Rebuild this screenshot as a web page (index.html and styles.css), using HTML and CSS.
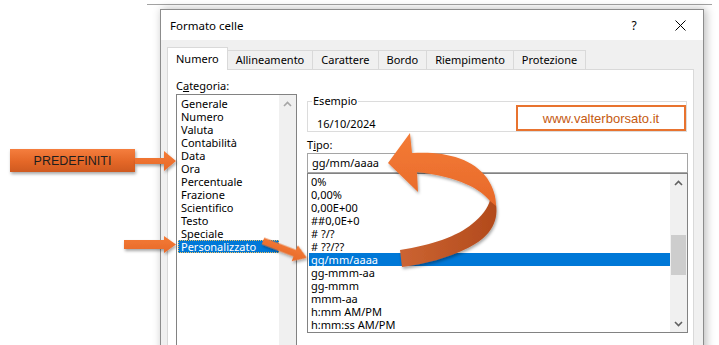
FILE: index.html
```html
<!DOCTYPE html>
<html lang="it">
<head>
    <meta charset="UTF-8">
    <meta name="viewport" content="width=device-width, initial-scale=1.0">
    <title>Formato celle</title>
    <link rel="stylesheet" href="styles.css">
</head>
<body>
    <div class="desk">
        <div class="dialog">
            <div class="titlebar">
                <span class="title">Formato celle</span>
                <span class="tbtn help">?</span>
                <span class="tbtn">
                    <svg width="11" height="11" viewBox="0 0 11 11"><path d="M0.5 0.5 L10.5 10.5 M10.5 0.5 L0.5 10.5" stroke="#000" stroke-width="1" fill="none"/></svg>
                </span>
            </div>
            <div class="dialog-body">
                <div class="tabs">
                    <div class="tab active">Numero</div>
                    <div class="tab">Allineamento</div>
                    <div class="tab">Carattere</div>
                    <div class="tab">Bordo</div>
                    <div class="tab">Riempimento</div>
                    <div class="tab">Protezione</div>
                </div>
                <div class="panel">
                    <div class="col-left">
                        <div class="label">C<u>a</u>tegoria:</div>
                        <div class="listbox cat">
                            <ul class="items">
                                <li>Generale</li>
                                <li>Numero</li>
                                <li>Valuta</li>
                                <li>Contabilità</li>
                                <li>Data</li>
                                <li>Ora</li>
                                <li>Percentuale</li>
                                <li>Frazione</li>
                                <li>Scientifico</li>
                                <li>Testo</li>
                                <li>Speciale</li>
                                <li class="sel focus">Personalizzato</li>
                            </ul>
                            <div class="scrollbar">
                                <div class="sb-btn">
                                    <svg width="9" height="6" viewBox="0 0 9 6"><path d="M1 5 L4.5 1.5 L8 5" stroke="#a6a6a6" stroke-width="1.6" fill="none"/></svg>
                                </div>
                            </div>
                        </div>
                    </div>
                    <div class="col-right">
                        <div class="groupbox">
                            <span class="gb-title">Esempio</span>
                            <span class="date">16/10/2024</span>
                            <div class="watermark">www.valterborsato.it</div>
                        </div>
                        <div class="label tipo">T<u>i</u>po:</div>
                        <div class="input">gg/mm/aaaa</div>
                        <div class="listbox types">
                            <ul class="items">
                                <li>0%</li>
                                <li>0,00%</li>
                                <li>0,00E+00</li>
                                <li>##0,0E+0</li>
                                <li># ?/?</li>
                                <li># ??/??</li>
                                <li class="sel">gg/mm/aaaa</li>
                                <li>gg-mmm-aa</li>
                                <li>gg-mmm</li>
                                <li>mmm-aa</li>
                                <li>h:mm AM/PM</li>
                                <li>h:mm:ss AM/PM</li>
                            </ul>
                            <div class="scrollbar">
                                <div class="sb-btn">
                                    <svg width="9" height="6" viewBox="0 0 9 6"><path d="M1 5 L4.5 1.5 L8 5" stroke="#606060" stroke-width="1.6" fill="none"/></svg>
                                </div>
                                <div class="sb-track"><div class="thumb"></div></div>
                                <div class="sb-btn">
                                    <svg width="9" height="6" viewBox="0 0 9 6"><path d="M1 1 L4.5 4.5 L8 1" stroke="#606060" stroke-width="1.6" fill="none"/></svg>
                                </div>
                            </div>
                        </div>
                    </div>
                </div>
            </div>
        </div>
    </div>

    <div class="callout">PREDEFINITI</div>

    <svg class="arrows" width="719" height="345" viewBox="0 0 719 345">
        <defs>
            <filter id="sh" x="-20%" y="-20%" width="150%" height="160%">
                <feDropShadow dx="1" dy="2" stdDeviation="1.4" flood-color="#000" flood-opacity="0.35"/>
            </filter>
            <linearGradient id="front" x1="0" y1="0" x2="0" y2="1">
                <stop offset="0" stop-color="#f47b35"/>
                <stop offset="1" stop-color="#e7692a"/>
            </linearGradient>
            <linearGradient id="back" x1="1" y1="0" x2="0" y2="0">
                <stop offset="0" stop-color="#b24a1c"/>
                <stop offset="1" stop-color="#cc6432"/>
            </linearGradient>
        </defs>
        <g filter="url(#sh)" fill="url(#front)">
            <path d="M135 158 H164 V151 L176 161 L164 171 V164 H135 Z"/>
            <path d="M124 240 H164 V236 L176 244.5 L164 253 V249 H124 Z"/>
            <path transform="translate(263 241) rotate(21)" d="M0 -3.5 H34 V-8.5 L47 0 L34 8.5 V3.5 H0 Z"/>
            <path d="M400 250 C432 245 458 236 472 224 C482 216 488 208 490 200 L496 204 C499 224 488 238 468 248 C448 258 425 264 402 267 Z" fill="url(#back)"/>
            <path d="M388 163 L410 133 L412 153 C442 151 472 157 487 178 C493 187 496 196 496 206 L490 201 C480 189 460 177 417 172 L418 192 Z"/>
        </g>
    </svg>
</body>
</html>
```

FILE: styles.css
```css
* {
    box-sizing: border-box;
}
html, body {
    margin: 0;
    height: 100%;
    overflow: hidden;
}
body {
    position: relative;
    background-color: #fff;
    font-family: "Noto Sans", sans-serif;
    font-size: 11px;
    color: #000;
}
.desk {
    width: 565px;
    margin: 4px 0 0 147px;
    padding: 4px 0 0 13px;
    border-top: 1px solid #a3a3a3;
}
.dialog {
    width: 544px;
    height: 400px;
    border: 1px solid #8c8c8c;
    background-color: #f0f0f0;
    box-shadow: 2px 0 9px rgba(0, 0, 0, 0.28);
}
.titlebar {
    height: 30px;
    display: flex;
    align-items: center;
    padding-left: 9px;
    background-color: #fff;
}
.title {
    flex: 1;
    font-size: 11.5px;
}
.tbtn {
    width: 46px;
    height: 30px;
    display: flex;
    align-items: center;
    justify-content: center;
}
.help {
    font-size: 12px;
}
.dialog-body {
    padding: 7px 9px 0 6px;
}
.tabs {
    display: flex;
    align-items: flex-end;
    height: 22px;
    position: relative;
    z-index: 1;
}
.tab {
    height: 19px;
    padding: 0 8px;
    margin-left: -1px;
    border: 1px solid #d9d9d9;
    border-bottom: none;
    line-height: 18px;
    background-color: #f0f0f0;
    white-space: nowrap;
}
.tab:first-child {
    margin-left: 0;
}
.tab.active {
    height: 23px;
    margin-bottom: -1px;
    padding: 0 8px;
    line-height: 21px;
    background-color: #fff;
}
.panel {
    height: 330px;
    display: flex;
    gap: 10px;
    padding: 9px 5px 0 8px;
    border: 1px solid #d9d9d9;
    background-color: #fff;
}
.col-left {
    width: 121px;
}
.col-right {
    width: 381px;
}
.label {
    height: 13px;
    line-height: 13px;
    margin-bottom: 2px;
}
.listbox {
    display: flex;
    border: 1px solid #828282;
    background-color: #fff;
}
.cat {
    height: 270px;
}
.types {
    height: 160px;
}
.items {
    flex: 1;
    list-style: none;
    margin: 0;
    padding: 2px 0 0 1px;
}
.types .items {
    padding-top: 1px;
}
.items li {
    height: 13px;
    line-height: 13px;
    padding-left: 3px;
    white-space: nowrap;
}
.types .items li {
    padding-left: 2px;
}
.items li.sel {
    background-color: #0078d7;
    color: #fff;
}
.items li.focus {
    outline: 1px dotted #f0c060;
    outline-offset: -1px;
}
.scrollbar {
    width: 17px;
    display: flex;
    flex-direction: column;
    background-color: #f0f0f0;
}
.sb-btn {
    height: 17px;
    display: flex;
    align-items: center;
    justify-content: center;
}
.sb-track {
    flex: 1;
}
.thumb {
    height: 40px;
    margin: 44px 1px 0;
    background-color: #cdcdcd;
}
.groupbox {
    position: relative;
    height: 31px;
    margin: 22px 1px 0 0;
    padding-left: 9px;
    display: flex;
    justify-content: space-between;
    align-items: flex-end;
    border: 1px solid #dcdcdc;
}
.gb-title {
    position: absolute;
    left: 4px;
    top: -8px;
    padding: 0 1px;
    line-height: 13px;
    background-color: #fff;
}
.date {
    line-height: 13px;
    margin-bottom: 1px;
}
.watermark {
    width: 170px;
    height: 26px;
    display: flex;
    align-items: center;
    justify-content: center;
    border: 2px solid #e8732f;
    color: #c55a11;
    font-family: "Liberation Sans", Arial, sans-serif;
    font-size: 13px;
}
.tipo {
    margin-top: 6px;
}
.input {
    height: 20px;
    padding-left: 4px;
    line-height: 18px;
    border: 1px solid #a5a5a5;
}
.callout {
    position: absolute;
    left: 10px;
    top: 149px;
    width: 125px;
    height: 23px;
    display: flex;
    align-items: center;
    justify-content: center;
    background: linear-gradient(#f57e3e, #e46727 55%, #cf5a20);
    box-shadow: 1px 2px 3px rgba(0, 0, 0, 0.35);
    color: #1e1e1e;
    font-family: "Liberation Sans", Arial, sans-serif;
    font-size: 12.5px;
}
.arrows {
    position: absolute;
    left: 0;
    top: 0;
    z-index: 3;
    pointer-events: none;
}
```
